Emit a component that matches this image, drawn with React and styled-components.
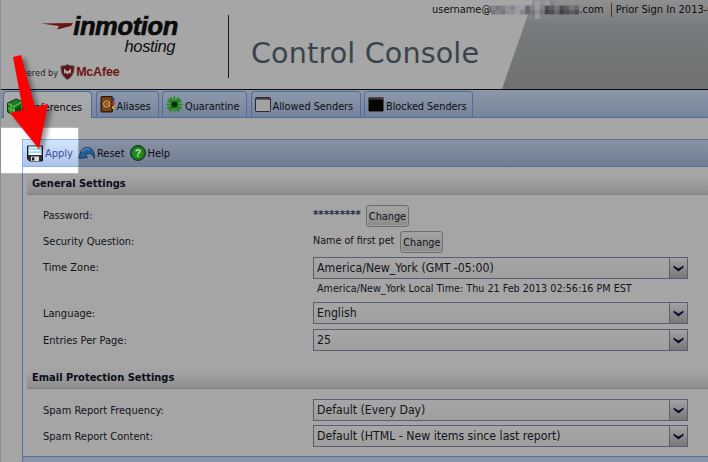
import React from "react";
import styled, { createGlobalStyle } from "styled-components";

const UI = `"DejaVu Sans Condensed", "DejaVu Sans", "Open Sans", sans-serif`;

const Global = createGlobalStyle`
  html, body { margin: 0; padding: 0; background: #a5a5a5; }
  body { width: 708px; height: 462px; overflow: hidden; font-family: ${UI}; font-stretch: condensed; color: #111; }
`;

const Page = styled.div`
  position: relative;
  width: 708px;
  height: 462px;
  overflow: hidden;
  background: #a5a5a5;
  border-left: 1px solid #8f8f8f;
  box-sizing: border-box;
`;

const Header = styled.header`
  position: relative;
  display: flex;
  height: 89px;
  box-sizing: content-box;
  border-bottom: 1px solid #0c0c0c;
  background: #a6a6a6;
  &::before {
    content: "";
    position: absolute;
    inset: 0;
    background: linear-gradient(180deg, #8f9092 0%, #777a7c 30%, #6f7172 100%);
    clip-path: polygon(501px 89px, 532px 0, 708px 0, 708px 89px);
  }
`;

const LogoBlock = styled.div`
  position: relative;
  z-index: 1;
  width: 227px;
  flex: none;
`;

const Brand = styled.div`
  display: flex;
  align-items: center;
  justify-content: flex-end;
  width: 177px;
  height: 22px;
  margin-top: 15px;
`;

const Swoosh = styled.svg`
  width: 33px;
  height: 8px;
  flex: none;
  margin-right: -1px;
`;

const BrandName = styled.span`
  font-family: "Liberation Sans", Arial, sans-serif;
  font-stretch: normal;
  font-weight: 700;
  font-style: italic;
  font-size: 25.5px;
  letter-spacing: -0.35px;
  line-height: 22px;
  -webkit-text-stroke: 0.7px #0b0b0b;
  color: #0b0b0b;
`;

const Hosting = styled.div`
  width: 174px;
  height: 16px;
  margin-top: 1px;
  text-align: right;
  font-family: "Liberation Sans", Arial, sans-serif;
  font-stretch: normal;
  font-style: italic;
  font-size: 16.5px;
  line-height: 16px;
  letter-spacing: -0.4px;
  color: #0d0d0d;
`;

const Powered = styled.div`
  display: flex;
  align-items: center;
  height: 16px;
  margin-top: 10px;
  margin-left: 19px;
  font-size: 9.2px;
  color: #222;
  white-space: nowrap;
`;

const McAfee = styled.span`
  font-family: "Liberation Sans", Arial, sans-serif;
  font-stretch: normal;
  font-weight: 700;
  font-size: 12.5px;
  letter-spacing: -0.2px;
  color: #6e1414;
`;

const Shield = styled.svg`
  width: 15px;
  height: 16px;
  margin: 0 1px 0 2px;
  flex: none;
`;

const Rule = styled.div`
  position: relative;
  z-index: 1;
  width: 1px;
  height: 63px;
  margin-top: 15px;
  background: #1a1a1a;
  flex: none;
`;

const Console = styled.h1`
  position: relative;
  z-index: 1;
  margin: 35px 0 0 22px;
  font-family: "DejaVu Sans", Verdana, sans-serif;
  font-stretch: normal;
  font-weight: 400;
  font-size: 28.6px;
  line-height: 36px;
  letter-spacing: 0.15px;
  color: #39434d;
  white-space: nowrap;
`;

const UserLine = styled.div`
  position: absolute;
  z-index: 2;
  top: 1px;
  left: 431px;
  display: flex;
  align-items: center;
  height: 17px;
  font-size: 11px;
  color: #0d0d0d;
  white-space: nowrap;
`;

const Blur = styled.svg`
  width: 88px;
  height: 18px;
  flex: none;
`;

const Pipe = styled.span`
  width: 1px;
  height: 14px;
  background: #5a3208;
  margin: 0 4px 0 7px;
`;

const TabBar = styled.nav`
  display: flex;
  align-items: flex-end;
  height: 28px;
  box-sizing: border-box;
  padding-left: 2px;
  gap: 3.5px;
  background: linear-gradient(180deg, #8c97a8 0%, #76849c 100%);
  border-bottom: 1px solid #4f6d9b;
`;

const Tab = styled.div`
  display: flex;
  align-items: center;
  gap: 2px;
  width: ${(p) => p.$w}px;
  height: 26px;
  box-sizing: border-box;
  padding: ${(p) => (p.$active ? "3px 0 0 3px" : "0 0 0 3px")};
  border: 1px solid #4f6d9b;
  border-bottom: 0;
  border-radius: 4px 4px 0 0;
  font-size: 10.8px;
  color: #0c0d12;
  white-space: nowrap;
  background: ${(p) =>
    p.$active
      ? "linear-gradient(180deg, #a8abae, #a5a5a5)"
      : "linear-gradient(180deg, #8d98aa 0%, #75839b 100%)"};
  ${(p) => p.$active && "margin-bottom: -1px; height: 27px;"}
`;

const TabLabel = styled.span`
  padding-top: ${(p) => (p.$active ? 2 : 4)}px;
`;

const Body = styled.main`
  margin: 21px 0 0 21px;
  border-left: 1px solid #56729e;
  height: 324px;
  display: flex;
  flex-direction: column;
`;

const Toolbar = styled.div`
  display: flex;
  align-items: center;
  height: 28px;
  box-sizing: border-box;
  padding-left: 4px;
  background: linear-gradient(180deg, #8893a4 0%, #6f7d94 100%);
  border-top: 1px solid #56729e;
  border-bottom: 1px solid #56729e;
  font-size: 11px;
  color: #0c0d12;
`;

const ToolItem = styled.div`
  display: flex;
  align-items: center;
  gap: 2px;
  margin-right: 5px;
  color: ${(p) => p.$color || "inherit"};
`;

const Content = styled.div`
  flex: 1;
  padding: 5px 0 0 4px;
  display: flex;
  flex-direction: column;
`;

const SectionHead = styled.h2`
  margin: ${(p) => p.$mt || 0}px 0 10px 0;
  height: 23px;
  box-sizing: border-box;
  padding-left: 5px;
  font-size: 11px;
  font-weight: 700;
  line-height: 24px;
  color: #0b0d18;
  background: linear-gradient(180deg, #a6a6a6 0%, #a0a0a0 35%, #8d8d8d 100%);
  border-bottom: 1px solid #808080;
`;

const Row = styled.div`
  display: grid;
  grid-template-columns: 270px 375px;
  align-items: ${(p) => p.$align || "center"};
  min-height: 22px;
  margin: 0 0 ${(p) => p.$mb ?? 4}px 16px;
  font-size: 11px;
  color: #111;
`;

const Label = styled.div`
  color: #12141a;
  padding-bottom: ${(p) => p.$raise || 0}px;
  padding-top: ${(p) => p.$drop || 0}px;
`;

const Value = styled.div`
  display: flex;
  align-items: center;
  gap: ${(p) => p.$gap}px;
`;

const Mask = styled.span`
  font-family: "DejaVu Sans", sans-serif;
  font-stretch: normal;
  font-size: 10.2px;
  font-weight: 700;
  color: #1a2a44;
  margin-top: -4px;
`;

const SmallText = styled.span`
  font-size: 10.7px;
  margin-top: -4px;
`;

const ChangeBtn = styled.div`
  width: 43px;
  height: 22px;
  box-sizing: border-box;
  display: flex;
  align-items: center;
  justify-content: center;
  border: 1px solid #6e6e6e;
  border-radius: 3px;
  box-shadow: inset 0 0 0 1px #a0a0a0;
  background: linear-gradient(180deg, #a5a5a5, #8b8b8b);
  font-size: 10.8px;
  color: #10121a;
`;

const Select = styled.div`
  display: flex;
  align-items: stretch;
  width: 375px;
  height: 22px;
  box-sizing: border-box;
  border: 1px solid #5c5f72;
  background: linear-gradient(180deg, #a6a6a6, #9e9f9e);
  font-size: 12.2px;
  color: #12141a;
`;

const SelectText = styled.div`
  flex: 1;
  display: flex;
  align-items: center;
  padding-left: 3px;
  white-space: nowrap;
`;

const SelectArrow = styled.div`
  width: 17px;
  flex: none;
  display: flex;
  align-items: center;
  justify-content: center;
  border-left: 1px solid #5c5f72;
  background: linear-gradient(180deg, #a3a3a3, #777);
`;

const LocalTime = styled.div`
  grid-column: 2;
  padding-left: 4px;
  font-size: 10.7px;
  line-height: 20px;
  color: #12141a;
  white-space: nowrap;
`;

const Foot = styled.div`
  height: 6px;
  margin: auto 0 0 -4px;
  border-top: 1px solid #56729e;
  background: #8794a8;
`;

const Spotlight = styled.div`
  position: absolute;
  left: 0;
  top: 128px;
  width: 77px;
  height: 45px;
  backdrop-filter: brightness(1.56);
  box-shadow: 0 0 1.5px rgba(255, 255, 255, 0.8);
  z-index: 5;
`;

const Arrow = styled.svg`
  position: absolute;
  left: 0;
  top: 50px;
  width: 60px;
  height: 110px;
  z-index: 6;
  overflow: visible;
`;

const Chevron = () => (
  <svg width="11" height="7" viewBox="0 0 11 7">
    <path d="M0.5 0.5 L5.5 3.5 L10.5 0.5 L10.5 2.5 L5.5 6.5 L0.5 2.5 Z" fill="#0c0f38" />
  </svg>
);

const Dropdown = ({ children }) => (
  <Select>
    <SelectText>{children}</SelectText>
    <SelectArrow><Chevron /></SelectArrow>
  </Select>
);

const PrefIcon = () => (
  <svg width="16" height="18" viewBox="0 0 16 18">
    <path d="M0.5 5 L9 1 L15.5 3.5 L15.5 13 L7 17.5 L0.5 14 Z" fill="#1f7a26" stroke="#0c3a10" />
    <path d="M1 5.5 L7 8.5 L15 4 M7 8.5 V17 M4 7 V15.5 M1 10 L7 13 L15 8.5" fill="none" stroke="#62c048" strokeWidth="1.1" />
    <path d="M8 10 L14 7 V12.5 L8 15.5 Z" fill="#0f4a16" />
  </svg>
);

const BookIcon = () => (
  <svg width="15" height="17" viewBox="0 0 15 17">
    <rect x="1" y="0.5" width="11.5" height="15.5" rx="1" fill="#5c2c12" stroke="#2a1206" />
    <rect x="2" y="1.5" width="9" height="13.5" fill="#7a4216" />
    <circle cx="6.6" cy="8" r="3" fill="none" stroke="#d0a060" strokeWidth="1.2" />
    <circle cx="6.8" cy="8" r="1" fill="#d0a060" />
    <rect x="12" y="2" width="2.5" height="3" fill="#2c3e78" />
    <rect x="12" y="6" width="2.5" height="3" fill="#b02a1e" />
    <rect x="12" y="10" width="2.5" height="3" fill="#c09a2a" />
  </svg>
);

const VirusIcon = () => (
  <svg width="17" height="17" viewBox="0 0 17 17">
    <g stroke="#23861f" strokeWidth="1.6" strokeLinecap="round">
      <path d="M8.5 1 V16 M1 8.5 H16 M3.2 3.2 L13.8 13.8 M13.8 3.2 L3.2 13.8 M5 1.8 L12 15.2 M12 1.8 L5 15.2 M1.8 5 L15.2 12 M1.8 12 L15.2 5" />
    </g>
    <circle cx="8.5" cy="8.5" r="3" fill="#0c2c10" />
  </svg>
);

const WindowIcon = ({ dark }) => (
  <svg width="16" height="15" viewBox="0 0 16 15">
    <rect x="0.5" y="0.5" width="15" height="14" rx="1" fill={dark ? "#050505" : "#a2a2a2"} stroke={dark ? "#4a4a4a" : "#2b2b2b"} />
    <rect x="1" y="1" width="14" height="1.6" fill={dark ? "#3a3a3a" : "#3c3c3c"} />
    <rect x="13" y="1" width="2" height="1.6" fill="#8a2a20" />
  </svg>
);

const Floppy = () => (
  <svg width="16" height="17" viewBox="0 0 16 17">
    <path d="M0.5 1 H15.5 V16 H2.5 L0.5 14 Z" fill="#1c1e22" stroke="#101114" />
    <rect x="1.5" y="1.5" width="13" height="8.5" fill="#9cb0c4" />
    <rect x="1.5" y="3.2" width="13" height="1.4" fill="#5a7fa8" />
    <rect x="1.5" y="6.4" width="13" height="1.4" fill="#5a7fa8" />
    <rect x="4" y="11.5" width="8" height="4.5" fill="#8f8f8f" />
    <rect x="5" y="12.3" width="2.4" height="3.2" fill="#15161a" />
  </svg>
);

const ResetIcon = () => (
  <svg width="17" height="14" viewBox="0 0 17 14">
    <path d="M0.5 12.5 L3 5 C5 2 9 0.5 12 2 C15 3.5 16.5 7 16.5 12.5 C15 9 13 7.5 11 7.5 C9.5 7.5 8 8 7.5 9 L9.5 11.5 Z" fill="#235f98" stroke="#0d2a48" strokeWidth="0.8" />
    <path d="M3.5 6 C5.5 3 9 2 12 3.5" fill="none" stroke="#5a9bd0" strokeWidth="1.2" />
  </svg>
);

const HelpIcon = () => (
  <svg width="16" height="16" viewBox="0 0 16 16">
    <circle cx="8" cy="8" r="7.5" fill="#15731a" stroke="#1f2a20" />
    <circle cx="8" cy="8" r="5.6" fill="#1f8a20" />
    <text x="8" y="11.6" textAnchor="middle" fontFamily="Liberation Sans, sans-serif" fontWeight="700" fontSize="10.5" fill="#c5d7a8">?</text>
  </svg>
);

const blurTones = [
  [0, 0, 0, 0, 0, 0, 0, 0, 0, 9, 8, 9, 7, 0, 0, 0, 0, 0],
  [7, 6, 7, 8, 7, 9, 9, 5, 7, 9, 7, 3, 4, 6, 3, 4, 6, 5],
  [6, 7, 6, 8, 8, 9, 7, 5, 6, 8, 6, 2, 3, 5, 2, 3, 4, 3],
  [0, 0, 0, 0, 0, 0, 0, 0, 0, 9, 7, 7, 0, 0, 0, 0, 0, 0],
];

const tone = (t) => {
  const v = 40 + t * 13;
  return `rgb(${v}, ${v}, ${v + 6})`;
};

export default function App() {
  return (
    <>
      <Global />
      <Page>
        <Header>
          <LogoBlock>
            <Brand>
              <Swoosh viewBox="0 0 33 8">
                <path d="M0 1.5 L32 1 L30 4 L16 7.5 L18 4 Z" fill="#6e1414" />
              </Swoosh>
              <BrandName>inmotion</BrandName>
            </Brand>
            <Hosting>hosting</Hosting>
            <Powered>
              wered by
              <Shield viewBox="0 0 15 16">
                <path d="M1 2 C4 2 6 1.5 7.5 0.5 C9 1.5 11 2 14 2 C14.5 8 12 13 7.5 15.5 C3 13 0.5 8 1 2 Z" fill="#5f1414" stroke="#555" />
                <path d="M4 10 V4.5 L7.5 7.5 L11 4.5 V10 L9.5 8.5 L7.5 10.5 L5.5 8.5 Z" fill="#b9a9a9" />
              </Shield>
              <McAfee>McAfee</McAfee>
            </Powered>
          </LogoBlock>
          <Rule />
          <Console>Control Console</Console>
          <UserLine>
            username@
            <Blur viewBox="0 0 90 18">
              {blurTones.map((row, r) =>
                row.map((t, c) =>
                  t ? <rect key={`${r}-${c}`} x={c * 5} y={r * 4.5} width="5" height="4.5" fill={tone(t)} /> : null
                )
              )}
            </Blur>
            .com
            <Pipe />
            Prior Sign In 2013-0
          </UserLine>
        </Header>

        <TabBar>
          <Tab $active $w={89}><PrefIcon /><TabLabel $active>Preferences</TabLabel></Tab>
          <Tab $w={63}><BookIcon /><TabLabel>Aliases</TabLabel></Tab>
          <Tab $w={85}><VirusIcon /><TabLabel>Quarantine</TabLabel></Tab>
          <Tab $w={110}><WindowIcon /><TabLabel>Allowed Senders</TabLabel></Tab>
          <Tab $w={109}><WindowIcon dark /><TabLabel>Blocked Senders</TabLabel></Tab>
        </TabBar>

        <Body>
          <Toolbar>
            <ToolItem $color="#27305e"><Floppy />Apply</ToolItem>
            <ToolItem><ResetIcon />Reset</ToolItem>
            <ToolItem><HelpIcon />Help</ToolItem>
          </Toolbar>
          <Content>
            <SectionHead>General Settings</SectionHead>
            <Row>
              <Label $raise={2}>Password:</Label>
              <Value $gap={5}><Mask>*********</Mask><ChangeBtn>Change</ChangeBtn></Value>
            </Row>
            <Row>
              <Label $raise={2}>Security Question:</Label>
              <Value $gap={6}><SmallText>Name of first pet</SmallText><ChangeBtn>Change</ChangeBtn></Value>
            </Row>
            <Row $align="start" $mb={3}>
              <Label $drop={4}>Time Zone:</Label>
              <Dropdown>America/New_York (GMT -05:00)</Dropdown>
              <LocalTime>America/New_York Local Time: Thu 21 Feb 2013 02:56:16 PM EST</LocalTime>
            </Row>
            <Row $mb={5}>
              <Label>Language:</Label>
              <Dropdown>English</Dropdown>
            </Row>
            <Row>
              <Label>Entries Per Page:</Label>
              <Dropdown>25</Dropdown>
            </Row>
            <SectionHead $mt={11}>Email Protection Settings</SectionHead>
            <Row>
              <Label>Spam Report Frequency:</Label>
              <Dropdown>Default (Every Day)</Dropdown>
            </Row>
            <Row>
              <Label>Spam Report Content:</Label>
              <Dropdown>Default (HTML - New items since last report)</Dropdown>
            </Row>
            <Foot />
          </Content>
        </Body>

        <Spotlight />
        <Arrow viewBox="0 0 60 110">
          <defs>
            <filter id="arrowShadow" x="-30%" y="-30%" width="160%" height="160%">
              <feGaussianBlur stdDeviation="2.5" />
            </filter>
          </defs>
          <path d="M12 7 L20 5 L34 57 L47 54 L38 99 L9 63 L22 60 Z" fill="#000" opacity="0.4" filter="url(#arrowShadow)" transform="translate(4 3)" />
          <path d="M12 7 L20 5 L34 57 L47 54 L38 99 L9 63 L22 60 Z" fill="#fb0000" />
        </Arrow>
      </Page>
    </>
  );
}
